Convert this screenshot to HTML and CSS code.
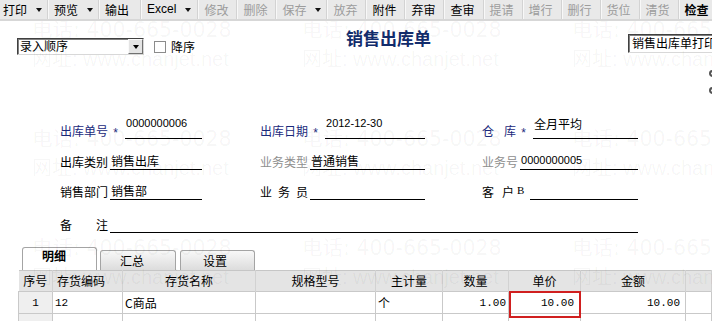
FILE: index.html
```html
<!DOCTYPE html>
<html lang="zh">
<head>
<meta charset="utf-8">
<title>销售出库单</title>
<link rel="stylesheet" href="styles.css">
</head>
<body>
<div class="page">
  <div class="toolbar">
    <span class="tb first dd">打印<i class="arr"></i></span>
    <span class="tb dd">预览<i class="arr"></i></span>
    <span class="tb wide">输出</span>
    <span class="tb dd latin">Excel<i class="arr"></i></span>
    <span class="tb off">修改</span>
    <span class="tb off">删除</span>
    <span class="tb dd off">保存<i class="arr"></i></span>
    <span class="tb off">放弃</span>
    <span class="tb">附件</span>
    <span class="tb">弃审</span>
    <span class="tb">查审</span>
    <span class="tb off">提请</span>
    <span class="tb off">增行</span>
    <span class="tb off">删行</span>
    <span class="tb off">货位</span>
    <span class="tb off">清货</span>
    <span class="tb strong">检查</span>
  </div>

  <div class="head">
    <div class="sort">
      <div class="sel">
        <span class="sel-text">录入顺序</span>
        <span class="sel-btn"><i class="sel-arr"></i></span>
      </div>
      <span class="chk"></span>
      <span class="chk-label">降序</span>
    </div>
    <h1 class="title">销售出库单</h1>
    <div class="tpl">
      <div class="sel2">销售出库单打印</div>
      <div class="radios">
        <span class="radio"></span>
        <span class="radio"></span>
      </div>
    </div>
  </div>

  <div class="form">
    <div class="frow r1">
      <div class="field c1">
        <span class="lbl key">出库单号</span><span class="star">*</span>
        <span class="line"><span class="val num hi">0000000006</span></span>
      </div>
      <div class="field c2">
        <span class="lbl key">出库日期</span><span class="star">*</span>
        <span class="line"><span class="val num hi">2012-12-30</span></span>
      </div>
      <div class="field c3">
        <span class="lbl key j w34">仓库</span><span class="star">*</span>
        <span class="line"><span class="val hi">全月平均</span></span>
      </div>
    </div>
    <div class="frow r2">
      <div class="field c1">
        <span class="lbl">出库类别</span>
        <span class="line"><span class="val">销售出库</span></span>
      </div>
      <div class="field c2">
        <span class="lbl dim">业务类型</span>
        <span class="line"><span class="val">普通销售</span></span>
      </div>
      <div class="field c3">
        <span class="lbl dim">业务号</span>
        <span class="line"><span class="val num">0000000005</span></span>
      </div>
    </div>
    <div class="frow r3">
      <div class="field c1">
        <span class="lbl">销售部门</span>
        <span class="line"><span class="val">销售部</span></span>
      </div>
      <div class="field c2">
        <span class="lbl j w48">业务员</span>
        <span class="line"></span>
      </div>
      <div class="field c3">
        <span class="lbl j w32">客户</span><span class="bval">B</span>
        <span class="line"></span>
      </div>
    </div>
    <div class="frow r4">
      <div class="field c4">
        <span class="lbl j w48">备注</span>
        <span class="line"></span>
      </div>
    </div>
  </div>

  <div class="tabs">
    <span class="tab on">明细</span>
    <span class="tab t2">汇总</span>
    <span class="tab t3">设置</span>
  </div>

  <table class="grid">
    <colgroup>
      <col class="k1"><col class="k2"><col class="k3"><col class="k4"><col class="k5"><col class="k6"><col class="k7"><col class="k8"><col>
    </colgroup>
    <thead>
      <tr>
        <th>序号</th><th class="lft">存货编码</th><th>存货名称</th><th>规格型号</th><th>主计量</th><th>数量</th><th>单价</th><th>金额</th><th></th>
      </tr>
    </thead>
    <tbody>
      <tr>
        <td class="idx mono">1</td>
        <td class="mono pl">12</td>
        <td class="pl">C商品</td>
        <td></td>
        <td class="pl">个</td>
        <td class="mono num-r">1.00</td>
        <td class="mono num-r edit"><span class="editbox"></span>10.00</td>
        <td class="mono num-r amt">10.00</td>
        <td></td>
      </tr>
      <tr class="empty">
        <td class="idx"></td><td></td><td></td><td></td><td></td><td></td><td></td><td></td><td></td>
      </tr>
    </tbody>
  </table>

  <div class="watermark" aria-hidden="true">
    <div class="wm"><span class="wm-tel">电话: 400-665-0028</span><span class="wm-web">网址: www.chanjet.net</span></div>
    <div class="wm"><span class="wm-tel">电话: 400-665-0028</span><span class="wm-web">网址: www.chanjet.net</span></div>
    <div class="wm"><span class="wm-tel">电话: 400-665-0028</span><span class="wm-web">网址: www.chanjet.net</span></div>
    <div class="wm"><span class="wm-tel">电话: 400-665-0028</span><span class="wm-web">网址: www.chanjet.net</span></div>
    <div class="wm"><span class="wm-tel">电话: 400-665-0028</span><span class="wm-web">网址: www.chanjet.net</span></div>
    <div class="wm"><span class="wm-tel">电话: 400-665-0028</span><span class="wm-web">网址: www.chanjet.net</span></div>
    <div class="wm"><span class="wm-tel">电话: 400-665-0028</span><span class="wm-web">网址: www.chanjet.net</span></div>
    <div class="wm"><span class="wm-tel">电话: 400-665-0028</span><span class="wm-web">网址: www.chanjet.net</span></div>
    <div class="wm"><span class="wm-tel">电话: 400-665-0028</span><span class="wm-web">网址: www.chanjet.net</span></div>
  </div>
</div>
</body>
</html>
```

FILE: styles.css
```css
* { box-sizing: border-box; }

body {
  margin: 0;
  background: #fff;
  color: #000;
  font-family: "Noto Sans CJK SC", sans-serif;
  font-size: 12px;
}

.page {
  position: relative;
  width: 712px;
  height: 321px;
  overflow: hidden;
  background: #fff;
}

/* ---------- toolbar ---------- */
.toolbar {
  position: relative;
  z-index: 2;
  display: flex;
  height: 21px;
  background: #e9e9e9;
  border-bottom: 2px solid #d7d7d7;
  white-space: nowrap;
}

.tb {
  display: flex;
  align-items: center;
  flex: none;
  height: 19px;
  padding: 0 8px 0 6px;
  line-height: 19px;
  border-right: 1px solid #d3d3d3;
  box-shadow: inset 1px 0 0 #f8f8f8;
}

.tb.first { padding-left: 3px; box-shadow: none; }
.tb.dd { padding-right: 5px; }
.tb.wide { padding-right: 11px; }
.tb.latin { font-family: "Liberation Sans", sans-serif; font-size: 12px; padding-right: 6px; }
.tb.off { color: #9c9c9c; }
.tb.strong { font-weight: 700; }

.arr {
  display: inline-block;
  width: 0;
  height: 0;
  margin-left: 9px;
  border-left: 3.5px solid transparent;
  border-right: 3.5px solid transparent;
  border-top: 4px solid #111;
}

/* ---------- head ---------- */
.head {
  display: flex;
  height: 87px;
  white-space: nowrap;
}

.sort {
  display: flex;
  flex: none;
  align-items: center;
  height: 17px;
  margin: 17px 0 0 17px;
}

.sel {
  display: flex;
  flex: none;
  width: 127px;
  height: 17px;
  background: #fff;
  border: 1px solid;
  border-color: #404040 #d8d8d8 #d8d8d8 #404040;
  box-shadow: inset 1px 1px 0 #808080;
}

.sel-text {
  flex: 1;
  padding-left: 2px;
  line-height: 14px;
}

.sel-btn {
  display: flex;
  align-items: center;
  justify-content: center;
  width: 15px;
  height: 15px;
  background: #e4e4e4;
  border: 1px solid;
  border-color: #fafafa #707070 #707070 #fafafa;
}

.sel-arr {
  width: 0;
  height: 0;
  border-left: 3.5px solid transparent;
  border-right: 3.5px solid transparent;
  border-top: 4px solid #000;
}

.chk {
  flex: none;
  width: 12px;
  height: 12px;
  margin-left: 10px;
  background: #fff;
  border: 1px solid #8c8c8c;
}

.chk-label {
  flex: none;
  margin-left: 5px;
  line-height: 14px;
}

.title {
  flex: none;
  margin: 7px 0 0 151px;
  font-size: 17px;
  line-height: 20px;
  font-weight: 700;
  color: #122c6c;
}

.tpl {
  flex: none;
  margin: 13px 0 0 197px;
  display: flex;
  flex-direction: column;
}

.sel2 {
  width: 110px;
  height: 19px;
  padding-left: 3px;
  line-height: 16px;
  border: 1px solid;
  border-color: #404040 #d8d8d8 #d8d8d8 #404040;
  box-shadow: inset 1px 1px 0 #808080;
}

.radios {
  display: flex;
  flex-direction: column;
  gap: 10px;
  margin: 17px 0 0 81px;
}

.radio {
  width: 8px;
  height: 7px;
  border: 2px solid #555;
  border-radius: 50%;
}

/* ---------- form ---------- */
.form {
  display: flex;
  flex-direction: column;
  padding-left: 60px;
}

.frow {
  display: flex;
  align-items: flex-end;
  height: 31px;
}
.frow.r3 { height: 30px; }
.frow.r4 { height: 33px; }

.field {
  display: flex;
  align-items: flex-end;
  height: 100%;
}
.c1 { width: 142px; margin-right: 58px; }
.c2 { width: 165px; margin-right: 57px; }
.c3 { width: 156px; }
.c4 { width: 578px; }

.lbl {
  display: block;
  flex: none;
  line-height: 14px;
  padding-bottom: 1px;
  white-space: nowrap;
}
.lbl.key { color: #1b2a7c; }
.lbl.dim { color: #8e8e8e; }
.lbl.j { text-align: justify; text-align-last: justify; }
.w48 { width: 48px; }
.w34 { width: 34px; }
.w32 { width: 32px; }

.star {
  flex: none;
  width: 15px;
  padding-bottom: 1px;
  text-align: center;
  line-height: 10px;
  font-family: "Liberation Sans", sans-serif;
  font-size: 12px;
  color: #1b2a7c;
}

.bval {
  flex: none;
  width: 14px;
  padding: 0 0 4px 3px;
  line-height: 12px;
  font-family: "Liberation Serif", serif;
  font-size: 11px;
}

.line {
  flex: 1;
  display: flex;
  align-items: flex-end;
  height: 100%;
  margin-left: 2px;
  border-bottom: 1px solid #000;
}

.val {
  padding: 0 0 2px 1px;
  line-height: 13px;
  white-space: nowrap;
}
.val.num {
  font-family: "Liberation Sans", sans-serif;
  font-size: 11px;
}
.val.hi { padding-bottom: 8px; }

/* ---------- tabs ---------- */
.tabs {
  display: flex;
  align-items: flex-end;
  gap: 3px;
  height: 23px;
  margin-top: 14px;
  padding-left: 22px;
}

.tab {
  width: 76px;
  height: 20px;
  padding-left: 19px;
  line-height: 19px;
  background: linear-gradient(#f8f8f8, #dcdcdc);
  border: 1px solid #a4a4a4;
  border-bottom: none;
  border-radius: 3px 3px 0 0;
}
.tab.on {
  width: 75px;
  height: 23px;
  padding-left: 19px;
  line-height: 16px;
  font-weight: 700;
  background: #fff;
}
.tab.t3 { padding-left: 22px; width: 75px; margin-left: 1px; }

/* ---------- grid ---------- */
.grid {
  margin-left: 18px;
  width: 694px;
  border-collapse: collapse;
  table-layout: fixed;
}

.k1 { width: 34px; }
.k2 { width: 70px; }
.k3 { width: 133px; }
.k4 { width: 120px; }
.k5 { width: 67px; }
.k6 { width: 66px; }
.k7 { width: 72px; }
.k8 { width: 105px; }

.grid th {
  height: 21px;
  padding: 0;
  font-weight: 400;
  line-height: 20px;
  text-align: center;
  background: #e4e4e4;
  border-top: 1px solid #c6c6c6;
  border-right: 1px solid #d2d2d2;
  white-space: nowrap;
}
.grid th.lft { text-align: left; padding-left: 4px; }

.grid td {
  height: 22px;
  padding: 0;
  line-height: 20px;
  border: 1px solid #c9c9c9;
  white-space: nowrap;
}
.grid tr.empty td { height: 12px; }

.grid td.idx { background: #efefef; text-align: center; }
.grid td.pl { padding-left: 2px; }
.grid td.num-r { text-align: right; padding-right: 2px; }
.grid td.edit { position: relative; padding-right: 6px; }
.grid td.amt { padding-right: 5px; }

.mono {
  font-family: "Liberation Mono", monospace;
  font-size: 11px;
}

.editbox {
  position: absolute;
  left: 0;
  top: -1px;
  width: 72px;
  height: 27px;
  border: 2px solid #d01f1f;
}

/* ---------- watermark ---------- */
.watermark {
  position: absolute;
  z-index: 1;
  left: 32px;
  top: 20px;
  display: grid;
  grid-template-columns: repeat(3, 270px);
  grid-auto-rows: 109px;
  pointer-events: none;
  color: rgba(0, 0, 0, 0.045);
  white-space: nowrap;
}

.wm {
  display: flex;
  flex-direction: column;
  gap: 9px;
}

.wm-tel {
  font-family: "DejaVu Sans", "Noto Sans CJK SC", sans-serif;
  font-size: 20.5px;
  line-height: 20px;
}

.wm-web {
  font-family: "Liberation Sans", "Noto Sans CJK SC", sans-serif;
  font-size: 20px;
  line-height: 20px;
}
```
